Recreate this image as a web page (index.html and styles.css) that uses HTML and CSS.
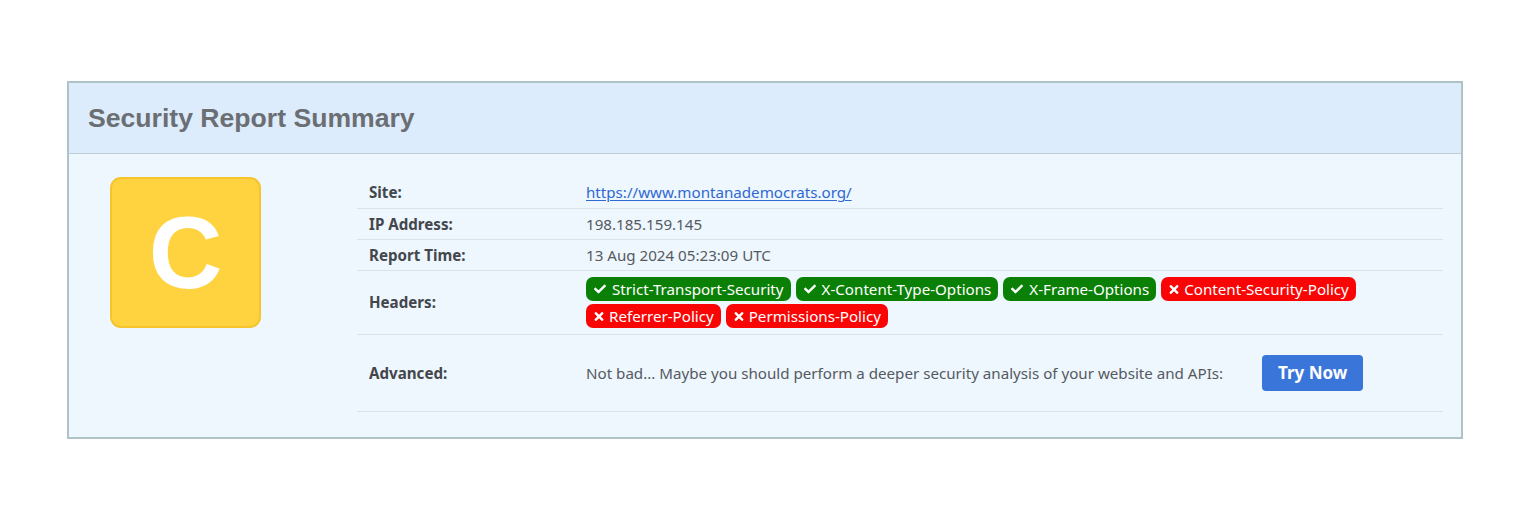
FILE: index.html
```html
<!DOCTYPE html>
<html>
<head>
<meta charset="utf-8">
<link rel="stylesheet" href="styles.css">
</head>
<body>
<section class="panel">
  <header class="panel-head">
    <h1 class="title">Security Report Summary</h1>
  </header>
  <div class="panel-body">
    <div class="grade-col">
      <div class="grade">C</div>
    </div>
    <table class="report">
      <tr class="row-short">
        <th>Site:</th>
        <td><a class="site-link" href="#">https://www.montanademocrats.org/</a></td>
      </tr>
      <tr class="row-short">
        <th>IP Address:</th>
        <td>198.185.159.145</td>
      </tr>
      <tr class="row-short">
        <th>Report Time:</th>
        <td>13 Aug 2024 05:23:09 UTC</td>
      </tr>
      <tr class="row-headers">
        <th>Headers:</th>
        <td>
          <div class="badges">
            <span class="badge ok"><svg class="ico" viewBox="0 0 512 512"><path d="M173.9 439.4l-166.4-166.4c-10-10-10-26.2 0-36.2l36.2-36.2c10-10 26.2-10 36.2 0L192 312.7 432.1 72.6c10-10 26.2-10 36.2 0l36.2 36.2c10 10 10 26.2 0 36.2L210.1 439.4c-10 10-26.2 10-36.2 0z"/></svg>Strict-Transport-Security</span>
            <span class="badge ok"><svg class="ico" viewBox="0 0 512 512"><path d="M173.9 439.4l-166.4-166.4c-10-10-10-26.2 0-36.2l36.2-36.2c10-10 26.2-10 36.2 0L192 312.7 432.1 72.6c10-10 26.2-10 36.2 0l36.2 36.2c10 10 10 26.2 0 36.2L210.1 439.4c-10 10-26.2 10-36.2 0z"/></svg>X-Content-Type-Options</span>
            <span class="badge ok"><svg class="ico" viewBox="0 0 512 512"><path d="M173.9 439.4l-166.4-166.4c-10-10-10-26.2 0-36.2l36.2-36.2c10-10 26.2-10 36.2 0L192 312.7 432.1 72.6c10-10 26.2-10 36.2 0l36.2 36.2c10 10 10 26.2 0 36.2L210.1 439.4c-10 10-26.2 10-36.2 0z"/></svg>X-Frame-Options</span>
            <span class="badge bad"><svg class="ico x" viewBox="0 0 352 512"><path d="M242.7 256l100.1-100.1c12.3-12.3 12.3-32.2 0-44.5l-22.2-22.2c-12.3-12.3-32.2-12.3-44.5 0L176 189.3 75.9 89.2c-12.3-12.3-32.2-12.3-44.5 0L9.2 111.4c-12.3 12.3-12.3 32.2 0 44.5L109.3 256 9.2 356.1c-12.3 12.3-12.3 32.2 0 44.5l22.2 22.2c12.3 12.3 32.2 12.3 44.5 0L176 322.7l100.1 100.1c12.3 12.3 32.2 12.3 44.5 0l22.2-22.2c12.3-12.3 12.3-32.2 0-44.5L242.7 256z"/></svg>Content-Security-Policy</span>
            <span class="badge bad"><svg class="ico x" viewBox="0 0 352 512"><path d="M242.7 256l100.1-100.1c12.3-12.3 12.3-32.2 0-44.5l-22.2-22.2c-12.3-12.3-32.2-12.3-44.5 0L176 189.3 75.9 89.2c-12.3-12.3-32.2-12.3-44.5 0L9.2 111.4c-12.3 12.3-12.3 32.2 0 44.5L109.3 256 9.2 356.1c-12.3 12.3-12.3 32.2 0 44.5l22.2 22.2c12.3 12.3 32.2 12.3 44.5 0L176 322.7l100.1 100.1c12.3 12.3 32.2 12.3 44.5 0l22.2-22.2c12.3-12.3 12.3-32.2 0-44.5L242.7 256z"/></svg>Referrer-Policy</span>
            <span class="badge bad"><svg class="ico x" viewBox="0 0 352 512"><path d="M242.7 256l100.1-100.1c12.3-12.3 12.3-32.2 0-44.5l-22.2-22.2c-12.3-12.3-32.2-12.3-44.5 0L176 189.3 75.9 89.2c-12.3-12.3-32.2-12.3-44.5 0L9.2 111.4c-12.3 12.3-12.3 32.2 0 44.5L109.3 256 9.2 356.1c-12.3 12.3-12.3 32.2 0 44.5l22.2 22.2c12.3 12.3 32.2 12.3 44.5 0L176 322.7l100.1 100.1c12.3 12.3 32.2 12.3 44.5 0l22.2-22.2c12.3-12.3 12.3-32.2 0-44.5L242.7 256z"/></svg>Permissions-Policy</span>
          </div>
        </td>
      </tr>
      <tr class="row-adv">
        <th>Advanced:</th>
        <td>
          <div class="adv">
            <span>Not bad... Maybe you should perform a deeper security analysis of your website and APIs:</span>
            <a class="btn" href="#">Try Now</a>
          </div>
        </td>
      </tr>
    </table>
  </div>
</section>
</body>
</html>
```

FILE: styles.css
```css
html, body {
  margin: 0;
  padding: 0;
  background: #ffffff;
}
body {
  padding: 81px 0 0 67px;
  font-family: "Noto Sans", "Open Sans", sans-serif;
}
.panel {
  width: 1392px;
  border: 2px solid #afc3c7;
  background: #eef6fe;
}
.panel-head {
  height: 70px;
  background: #dcecfc;
  border-bottom: 1px solid #bccfd5;
  display: flex;
  align-items: center;
  padding-left: 19px;
}
.title {
  margin: 0;
  font-family: "Liberation Sans", Arial, sans-serif;
  font-weight: 700;
  font-size: 26.6px;
  color: #6b6e73;
  letter-spacing: 0;
}
.panel-body {
  display: flex;
  padding: 23px 18px 25px 41px;
}
.grade-col {
  width: 247px;
  flex: none;
}
.grade {
  width: 147px;
  height: 147px;
  box-sizing: content-box;
  border: 2px solid #f6c42c;
  border-radius: 11px;
  background: #fed33f;
  color: #ffffff;
  font-family: "Liberation Sans", Arial, sans-serif;
  font-weight: 700;
  font-size: 102px;
  display: flex;
  align-items: center;
  justify-content: center;
  line-height: 1;
}
.report {
  flex: 1;
  border-collapse: collapse;
  font-size: 15.15px;
  color: #555a5f;
}
.report th {
  width: 217px;
  text-align: left;
  font-weight: 700;
  color: #43474c;
  padding: 0 0 0 12px;
  vertical-align: middle;
}
.report td {
  padding: 0;
  vertical-align: middle;
}
.report tr {
  border-bottom: 1px solid #d9e3ea;
}
.row-short {
  height: 31px;
}
.row-headers {
  height: 64px;
}
.row-adv {
  height: 77px;
}
.site-link {
  color: #2f69d2;
  text-decoration: underline;
  text-underline-offset: 2px;
}
.badges {
  display: flex;
  flex-wrap: wrap;
  gap: 3px 5px;
  padding: 1px 0 0 0;
}
.badge {
  display: inline-flex;
  align-items: center;
  height: 24px;
  padding: 0 7px 0 8px;
  border-radius: 7px;
  color: #ffffff;
  font-size: 15.15px;
  line-height: 24px;
  box-sizing: border-box;
}
.badge.ok {
  background: #0a8007;
}
.badge.bad {
  background: #fa0505;
}
.ico {
  width: 12px;
  height: 12px;
  fill: #ffffff;
  margin-right: 6px;
}
.ico.x {
  width: 10px;
  height: 13px;
  margin-right: 5px;
}
.adv {
  display: flex;
  align-items: center;
}
.btn {
  margin-left: 39px;
  display: inline-flex;
  align-items: center;
  justify-content: center;
  width: 101px;
  height: 36px;
  border-radius: 4px;
  background: #3a75d9;
  color: #ffffff;
  font-weight: 700;
  font-size: 17px;
  text-decoration: none;
}
```
